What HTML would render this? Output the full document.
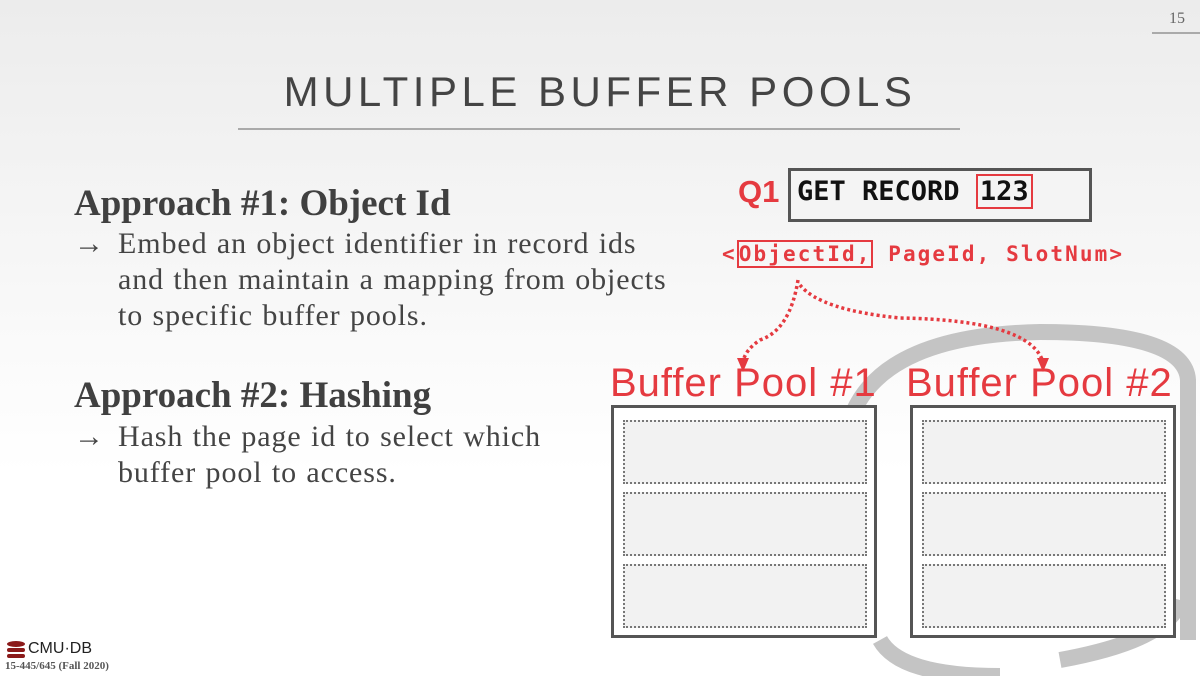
<!DOCTYPE html>
<html><head><style>
body{margin:0;width:1200px;height:676px;overflow:hidden;position:relative;background:linear-gradient(#ececec,#ffffff 70%);font-family:"Liberation Serif",serif}
.a{position:absolute;white-space:nowrap}
.h{font-weight:bold;font-size:37px;color:#404040}
.b{font-size:30px;color:#444;line-height:36px;letter-spacing:0.9px;word-spacing:1px}
.mono{font-family:"DejaVu Sans Mono","Liberation Mono",monospace;font-weight:bold}
.pool{position:absolute;width:260px;height:227px;border:3px solid #555;background:#fff;top:405px}
.slot{position:absolute;left:9px;width:240px;height:60px;border:2px dotted #777;background:#f2f2f2}
.bp{font-family:"Liberation Sans",sans-serif;font-size:40px;letter-spacing:1px;color:#e53a40;top:361px}
</style></head><body>
<svg class="a" style="left:0;top:0" width="1200" height="676">
<path d="M850 420 Q880 335 1040 332 Q1185 332 1188 380 L1188 640" fill="none" stroke="#c4c4c4" stroke-width="16"/>
<path d="M880 640 Q900 676 1000 676 M1060 660 Q1170 640 1180 600" fill="none" stroke="#c4c4c4" stroke-width="16"/>
<path d="M798 280 Q790 330 760 340 Q745 350 743 362" fill="none" stroke="#e53a40" stroke-width="3.5" stroke-dasharray="3 3"/>
<path d="M737 358 L743 372 L749 358 Z" fill="#e53a40"/>
<path d="M800 285 Q820 310 900 318 Q1030 320 1043 362" fill="none" stroke="#e53a40" stroke-width="3.5" stroke-dasharray="3 3"/>
<path d="M1037 358 L1043 372 L1049 358 Z" fill="#e53a40"/>
</svg>
<div class="a" style="left:1169px;top:10px;font-size:16px;color:#666">15</div>
<div class="a" style="left:1152px;top:32px;width:48px;border-top:2px solid #aaa"></div>
<div class="a" style="left:0;width:1200px;text-align:center;top:68px;font-family:'Liberation Sans',sans-serif;font-size:42px;letter-spacing:4.5px;color:#444">MULTIPLE BUFFER POOLS</div>
<div class="a" style="left:238px;top:128px;width:722px;border-top:2px solid #aaa"></div>
<div class="a h" style="left:74px;top:182px">Approach #1: Object Id</div>
<div class="a b" style="left:74px;top:226px">→</div>
<div class="a b" style="left:118px;top:226px">Embed an object identifier in record ids<br>and then maintain a mapping from objects<br>to specific buffer pools.</div>
<div class="a h" style="left:74px;top:374px">Approach #2: Hashing</div>
<div class="a b" style="left:74px;top:419px">→</div>
<div class="a b" style="left:118px;top:419px">Hash the page id to select which<br>buffer pool to access.</div>
<div class="a" style="left:738px;top:174px;font-family:'Liberation Sans',sans-serif;font-weight:bold;font-size:31px;color:#e53a40">Q1</div>
<div class="a" style="left:788px;top:168px;width:298px;height:48px;border:3px solid #555;background:#f4f4f4"></div>
<div class="a mono" style="left:797px;top:176px;font-size:27px;color:#111">GET RECORD <span style="border:2px solid #e53a40;padding:0 2px">123</span></div>
<div class="a mono" style="left:722px;top:242px;font-size:21px;letter-spacing:2.1px;color:#e53a40">&lt;<span style="border:2px solid #e53a40">ObjectId,</span> PageId, SlotNum&gt;</div>
<div class="a bp" style="left:610px">Buffer Pool #1</div>
<div class="a bp" style="left:906px">Buffer Pool #2</div>
<div class="pool" style="left:611px"><div class="slot" style="top:12px"></div><div class="slot" style="top:84px"></div><div class="slot" style="top:156px"></div></div>
<div class="pool" style="left:910px"><div class="slot" style="top:12px"></div><div class="slot" style="top:84px"></div><div class="slot" style="top:156px"></div></div>
<svg class="a" style="left:6px;top:641px" width="20" height="18"><g fill="#8b1a1a"><ellipse cx="10" cy="3" rx="9" ry="3"/><rect x="1" y="7" width="18" height="4" rx="2"/><rect x="1" y="13" width="18" height="4" rx="2"/></g></svg>
<div class="a" style="left:28px;top:640px;font-family:'Liberation Sans',sans-serif;font-size:16px;color:#222">CMU·DB</div>
<div class="a" style="left:5px;top:660px;font-size:11px;font-weight:bold;color:#555">15-445/645 (Fall 2020)</div>
</body></html>
